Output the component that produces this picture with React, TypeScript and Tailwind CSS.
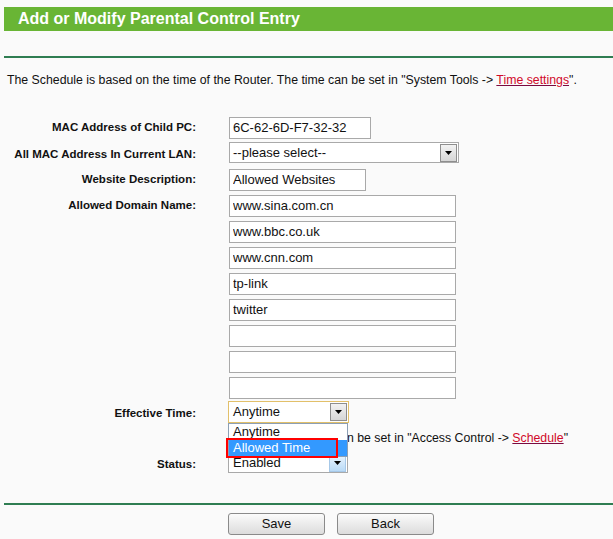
import React from "react";

const font = { fontFamily: '"Liberation Sans", Arial, sans-serif' };

const domains = ["www.sina.com.cn", "www.bbc.co.uk", "www.cnn.com", "tp-link", "twitter", "", "", ""];

function Arrow({ hover = false }: { hover?: boolean }) {
  return (
    <div
      className={
        "flex h-[18px] w-[17px] items-center justify-center border " +
        (hover
          ? "border-[#a6c8e8] bg-gradient-to-b from-[#eaf4fd] to-[#b9daf6]"
          : "border-[#8e8e8e] bg-gradient-to-b from-[#f2f2f2] to-[#d6d6d6]")
      }
    >
      <svg width="7" height="4" viewBox="0 0 7 4">
        <path d="M0 0h7L3.5 4z" fill="#000" />
      </svg>
    </div>
  );
}

function TextBox({ value, w }: { value: string; w: string }) {
  return (
    <input
      readOnly
      value={value}
      className={"h-[22px] border border-[#a9a9a9] bg-white pl-[3px] text-[13px] leading-[20px] text-[#111] outline-none " + w}
      style={font}
    />
  );
}

function Row({ label, h = "h-[26px]", children }: { label?: string; h?: string; children: React.ReactNode }) {
  return (
    <div className={"flex items-start " + h}>
      <div className="w-[192px] pt-[4px] text-right text-[11.5px] font-bold text-[#111]">{label}</div>
      <div className="ml-[33px]">{children}</div>
    </div>
  );
}

export default function App() {
  return (
    <div className="min-h-[539px] w-[613px] overflow-hidden bg-[#fafafa] pl-[4px] pt-[7px] text-[#111]" style={font}>
      <div className="flex h-[24px] items-center bg-[#69b535] pl-[14px] text-[16px] font-bold text-white">
        Add or Modify Parental Control Entry
      </div>
      <div className="mt-[25px] h-[2px] bg-[#2f7d52]" />
      <p className="mt-[13px] pl-[3px] text-[12.3px] leading-[18px]">
        The Schedule is based on the time of the Router. The time can be set in "System Tools -&gt;{" "}
        <span className="text-[#d10a2a] underline decoration-[#7a0a40]">Time settings</span>".
      </p>

      <div className="mt-[26px]">
        <Row label="MAC Address of Child PC:" h="h-[27px]">
          <TextBox value="6C-62-6D-F7-32-32" w="w-[142px]" />
        </Row>
        <Row label="All MAC Address In Current LAN:" h="h-[25px]">
          <div className="flex h-[21px] w-[230px] items-center justify-between border border-[#a9a9a9] bg-white pl-[3px] pr-[1px] text-[13px]">
            <span>--please select--</span>
            <Arrow />
          </div>
        </Row>
        <Row label="Website Description:">
          <TextBox value="Allowed Websites" w="w-[137px]" />
        </Row>
        {domains.map((d, i) => (
          <Row key={i} label={i === 0 ? "Allowed Domain Name:" : undefined}>
            <TextBox value={d} w="w-[227px]" />
          </Row>
        ))}

        <Row label="Effective Time:">
          <div className="relative -ml-[1px]">
            <div className="flex h-[22px] w-[121px] items-center justify-between border border-[#e2c06a] bg-white pl-[4px] pr-[1px] text-[13px]">
              <span>Anytime</span>
              <Arrow />
            </div>
            <div className="absolute left-0 top-[22px] z-10 w-[120px] border border-[#8c9fb4] bg-white text-[13px] leading-[16px]">
              <div className="pl-[4px]">Anytime</div>
              <div className="bg-[#3399ff] pl-[4px] text-white">Allowed Time</div>
            </div>
            <div className="absolute left-[-2px] top-[37px] z-20 h-[20px] w-[112px] border-2 border-[#ff0000]" />
          </div>
        </Row>
        <Row h="h-[25px]">
          <div className="pt-[2px] text-[12.3px]">
            The Effective Time can be set in "Access Control -&gt;{" "}
            <span className="text-[#d10a2a] underline decoration-[#7a0a40]">Schedule</span>"
          </div>
        </Row>
        <div className="flex h-[26px] items-start">
          <div className="w-[192px] pt-[4px] text-right text-[11.5px] font-bold text-[#111]">Status:</div>
          <div className="ml-[32px] flex h-[21px] w-[120px] items-center justify-between border border-[#a9a9a9] bg-white pl-[4px] pr-[1px] text-[13px]">
            <span>Enabled</span>
            <Arrow hover />
          </div>
        </div>
      </div>

      <div className="mt-[25px] h-[2px] bg-[#2f7d52]" />
      <div className="mt-[8px] flex gap-[12px] pl-[224px]">
        {["Save", "Back"].map((b) => (
          <button
            key={b}
            className="h-[22px] w-[97px] rounded-[3px] border border-[#8a8a8a] bg-gradient-to-b from-[#fbfbfb] to-[#dcdcdc] text-[13px] text-[#111]"
            style={font}
          >
            {b}
          </button>
        ))}
      </div>
    </div>
  );
}
